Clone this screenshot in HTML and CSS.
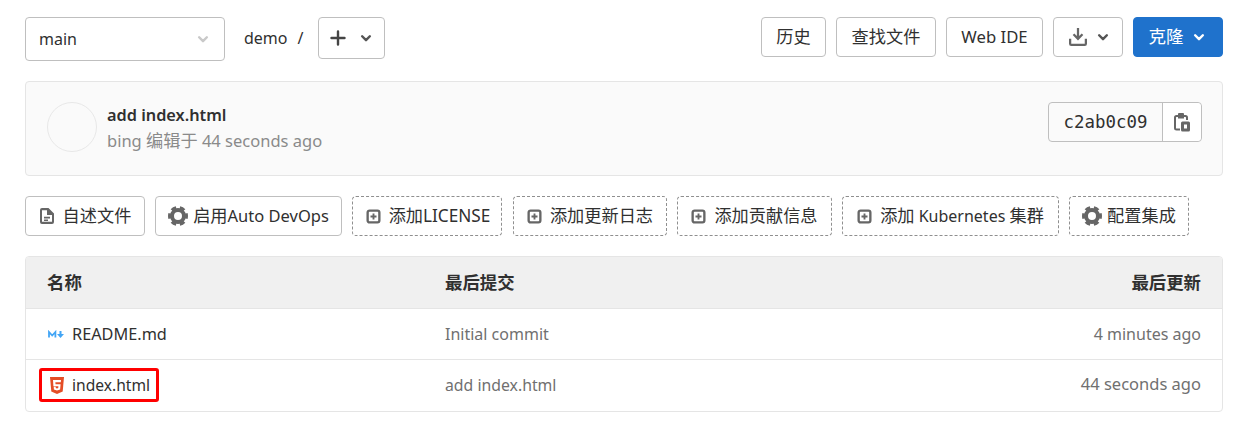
FILE: index.html
```html
<!DOCTYPE html>
<html lang="zh">
<head>
<meta charset="utf-8">
<title>demo</title>
<link rel="stylesheet" href="styles.css">
</head>
<body>
<svg class="sprite" width="0" height="0" aria-hidden="true">
  <defs>
    <symbol id="chev" viewBox="0 0 16 16"><path d="M3.600 6 8 10.400 12.400 6" fill="none" stroke="currentColor" stroke-width="2.800" stroke-linecap="round" stroke-linejoin="round"/></symbol>
    <symbol id="cog" viewBox="1 1 16 16"><circle cx="9" cy="9" r="4.800" fill="none" stroke="currentColor" stroke-width="3.200"/><circle cx="9" cy="9" r="6.900" fill="none" stroke="currentColor" stroke-width="2.200" pathLength="48" stroke-dasharray="4.600 3.400" stroke-dashoffset="2.300"/></symbol>
    <symbol id="addbox" viewBox="0 0 16 16"><rect x="1.750" y="1.750" width="12.500" height="12.500" rx="2" fill="none" stroke="currentColor" stroke-width="2.500"/><path d="M8 4.800v6.400M4.800 8h6.400" stroke="currentColor" stroke-width="2" fill="none"/></symbol>
  </defs>
</svg>

<div class="top">
  <div class="branch"><span>main</span><svg class="ic-s faint"><use href="#chev"/></svg></div>
  <span class="crumb">demo</span>
  <span class="slash">/</span>
  <button class="btn plus">
    <svg class="ic" viewBox="0 0 16 16"><path d="M8 1.500v13M1.500 8h13" stroke="currentColor" stroke-width="2.400" fill="none" stroke-linecap="round"/></svg>
    <svg class="ic-s"><use href="#chev"/></svg>
  </button>
  <div class="spacer"></div>
  <button class="btn act hist zh">历史</button>
  <button class="btn act find zh">查找文件</button>
  <button class="btn act ide">Web IDE</button>
  <button class="btn act dl">
    <svg class="ic dl-ic" viewBox="0 0 16 16"><path fill="currentColor" d="M7 0h2v7.200l2.300-2.300 1.400 1.400L8 11 3.300 6.300l1.400-1.400L7 7.200zM0 9.500h2V14h12V9.500h2V14a2 2 0 0 1-2 2H2a2 2 0 0 1-2-2z"/></svg>
    <svg class="ic-s"><use href="#chev"/></svg>
  </button>
  <button class="btn act clone">克隆<svg class="ic-s"><use href="#chev"/></svg></button>
</div>

<div class="commit">
  <div class="avatar"></div>
  <div class="meta">
    <div class="title">add index.html</div>
    <div class="sub">bing <span class="zh">编辑于</span> 44 seconds ago</div>
  </div>
  <div class="sha">
    <span class="hash">c2ab0c09</span>
    <button class="copy">
      <svg class="paste" viewBox="0 0 16 19"><path fill="currentColor" fill-rule="evenodd" d="M5 0h4a1 1 0 0 1 1 1v1h1.500A2.500 2.500 0 0 1 14 4.500V7h-2V4.500a.5.500 0 0 0-.5-.5H10v1.500H4V4H2.500a.5.500 0 0 0-.5.500V15a.5.500 0 0 0 .5.500H6v2H2.500A2.500 2.500 0 0 1 0 15V4.500A2.500 2.500 0 0 1 2.500 2H4V1a1 1 0 0 1 1-1zM8.500 8.500h6a1.500 1.500 0 0 1 1.500 1.500v7a1.500 1.500 0 0 1-1.500 1.500h-6A1.500 1.500 0 0 1 7 17v-7a1.500 1.500 0 0 1 1.500-1.500zm1.500 3v4h3v-4z"/></svg>
    </button>
  </div>
</div>

<div class="shortcuts">
  <a class="chip c1"><svg class="ic" viewBox="0 0 16 16"><path fill="currentColor" fill-rule="evenodd" d="M3 0h6.500L15 5.500V14a2 2 0 0 1-2 2H3a2 2 0 0 1-2-2V2a2 2 0 0 1 2-2zm0 2.200v11.600h10V7H8V2.200zM5 8.800h6v1.800H5zm0 2.800h4v1.500H5z"/></svg><span class="zh">自述文件</span></a>
  <a class="chip c2"><svg class="cog"><use href="#cog"/></svg><span><span class="zh">启用</span><span class="lat">Auto DevOps</span></span></a>
  <a class="chip dash c3"><svg class="box"><use href="#addbox"/></svg><span class="zh">添加LICENSE</span></a>
  <a class="chip dash c4"><svg class="box"><use href="#addbox"/></svg><span class="zh">添加更新日志</span></a>
  <a class="chip dash c5"><svg class="box"><use href="#addbox"/></svg><span class="zh">添加贡献信息</span></a>
  <a class="chip dash c6"><svg class="box"><use href="#addbox"/></svg><span><span class="zh">添加</span> Kubernetes <span class="zh">集群</span></span></a>
  <a class="chip dash c7"><svg class="cog"><use href="#cog"/></svg><span class="zh">配置集成</span></a>
</div>

<div class="files">
  <div class="row head">
    <div>名称</div>
    <div>最后提交</div>
    <div class="when">最后更新</div>
  </div>
  <div class="row">
    <div class="name plain">
      <svg class="ft" viewBox="0 0 16 16"><path fill="none" stroke="#42a5f5" stroke-width="1.800" d="M1 11V5.500L4.200 9l3.200-3.500V11"/><path fill="none" stroke="#42a5f5" stroke-width="2" d="M12.500 4.500V9"/><path fill="#42a5f5" d="M9 7.500h7L12.500 11.500z"/></svg>
      <span class="fname-a">README.md</span>
    </div>
    <div class="msg">Initial commit</div>
    <div class="when">4 minutes ago</div>
  </div>
  <div class="row last">
    <div class="name marked">
      <svg class="ft" viewBox="0 0 16 17"><path fill="#e44d26" d="M1 0h14l-1.300 14.500L8 17l-5.700-2.500z"/><path fill="#fff" d="M4 3h8l-.2 2.200H6.400l.1 2h5.100l-.5 5.300L8 13.600l-3.100-1.100-.2-2.700h2l.1 1.200 1.200.4 1.200-.4.200-1.800H4.400z"/></svg>
      <span class="fname-b">index.html</span>
    </div>
    <div class="msg msg-b">add index.html</div>
    <div class="when when-b">44 seconds ago</div>
  </div>
</div>
</body>
</html>
```

FILE: styles.css
```css
* { box-sizing: border-box; }

html, body { margin: 0; }

body {
  padding: 17px 19px 0 25px;
  width: 1242px;
  height: 422px;
  overflow: hidden;
  background: #fff;
  color: #303030;
  font-family: "Noto Sans", "Noto Sans CJK SC", sans-serif;
  font-size: 16px;
}

.sprite { position: absolute; }

.zh { font-size: 17.200px; }
.lat { font-size: 16.500px; }

.ic { width: 16px; height: 16px; flex: none; color: #666; }
.ic-s { width: 14px; height: 14px; flex: none; color: #555; }
.faint { color: #c9c9c9; }

.top { display: flex; align-items: flex-start; height: 44px; }

.branch {
  width: 200px;
  height: 44px;
  padding: 0 14px 0 13px;
  display: flex;
  align-items: center;
  justify-content: space-between;
  border: 1px solid #bfbfbf;
  border-radius: 4px;
}

.crumb { margin-left: 19px; line-height: 42px; }
.slash { margin-left: 10px; line-height: 42px; }

.btn {
  height: 40px;
  display: inline-flex;
  align-items: center;
  justify-content: center;
  font-family: inherit;
  font-size: 16px;
  color: #303030;
  background: #fff;
  border: 1px solid #bfbfbf;
  border-radius: 4px;
  padding: 0 0 3px;
}
.btn.zh { font-size: 17.200px; }

.plus { margin-left: 15px; width: 67px; height: 42px; gap: 13px; padding: 0; }
.plus .ic { color: #444; }

.spacer { flex: 1; }

.act { margin-left: 10px; }
.hist { width: 65px; }
.find { width: 100px; }
.btn.ide { width: 97px; font-size: 16.700px; padding-bottom: 1px; }
.btn.dl { width: 70px; gap: 9px; padding: 0 0 0 3px; }
.dl-ic { width: 18px; height: 18px; }
.btn.clone {
  width: 90px;
  gap: 8px;
  padding: 0 2px 3px 0;
  background: #1f72cc;
  border-color: #1f72cc;
  color: #fff;
  font-size: 17.500px;
}
.clone .ic-s { color: #fff; margin-top: 3px; }

.commit {
  margin-top: 20px;
  height: 95px;
  padding: 20px 20px 0 21px;
  display: flex;
  align-items: flex-start;
  background: #fafafa;
  border: 1px solid #e5e5e5;
  border-radius: 4px;
}

.avatar {
  width: 50px;
  height: 50px;
  border: 1px solid #e8e8e8;
  border-radius: 50%;
  background: #fafafa;
}

.meta { margin-left: 10px; flex: 1; }
.title { font-weight: 600; font-size: 16.300px; line-height: 26px; color: #303030; }
.sub { color: #8a8a8a; font-size: 16.500px; line-height: 26px; }

.sha {
  display: flex;
  height: 40px;
  border: 1px solid #bfbfbf;
  border-radius: 4px;
}

.hash {
  width: 114px;
  display: flex;
  align-items: center;
  justify-content: center;
  font-family: "DejaVu Sans Mono", monospace;
  font-size: 17.400px;
  border-right: 1px solid #bfbfbf;
}

.copy {
  width: 38px;
  padding: 0;
  display: flex;
  align-items: center;
  justify-content: center;
  background: #fff;
  border: 0;
  border-radius: 0 4px 4px 0;
}

.paste { width: 16px; height: 19px; color: #666; }

.shortcuts { display: flex; gap: 10px; margin-top: 20px; }

.chip {
  height: 40px;
  padding-bottom: 3px;
  display: flex;
  align-items: center;
  justify-content: center;
  gap: 8px;
  border: 1px solid #bfbfbf;
  border-radius: 4px;
  white-space: nowrap;
}
.chip svg { margin-top: 3px; }
.cog { width: 20px; height: 20px; flex: none; color: #666; }
.box { width: 15px; height: 15px; flex: none; color: #666; }
.dash { border: 1px dashed #8f8f8f; }
.c1 { width: 120px; }
.c2 { width: 187px; gap: 5px; }
.c3 { width: 150px; padding-left: 2px; }
.c4 { width: 154px; margin-left: 1px; }
.c5 { width: 155px; }
.c6 { width: 217px; }
.c7 { width: 120px; gap: 5px; }

.files {
  margin-top: 20px;
  border: 1px solid #e5e5e5;
  border-radius: 4px;
  overflow: hidden;
}

.row {
  height: 51px;
  padding: 0 21px;
  display: grid;
  grid-template-columns: 398px 1fr auto;
  align-items: center;
  border-top: 1px solid #e5e5e5;
}
.last { height: 52px; padding-bottom: 1px; }

.head {
  height: 51px;
  padding-bottom: 2px;
  border-top: 0;
  background: #f0f0f0;
  font-weight: 600;
  font-size: 17.400px;
  color: #303030;
}

.name { display: flex; align-items: center; gap: 8px; }
.plain { margin-left: 1px; }
.marked {
  margin-left: -8px;
  width: 120px;
  height: 34px;
  padding-left: 7px;
  gap: 7px;
  border: 3px solid #f00;
  border-radius: 3px;
}

.ft { width: 16px; height: 17px; flex: none; }
.fname-a { font-size: 16.300px; }
.fname-b { font-size: 15.600px; }

.msg, .when { color: #707070; }
.msg-b { font-size: 15.800px; }
.when-b { font-size: 16.500px; line-height: 20px; padding-bottom: 2px; }
.head .when { color: #303030; }
.when { text-align: right; }
```
